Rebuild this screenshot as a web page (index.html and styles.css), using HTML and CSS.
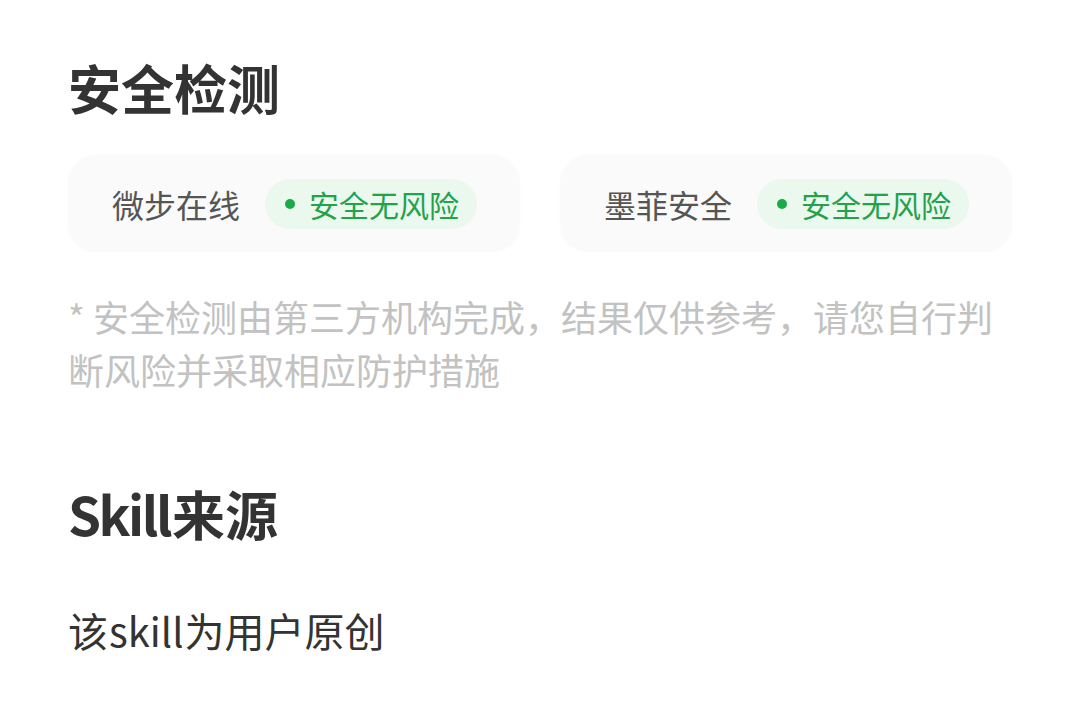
FILE: index.html
```html
<!DOCTYPE html>
<html lang="zh-CN">
<head>
<meta charset="utf-8">
<title>安全检测</title>
<link rel="stylesheet" href="styles.css">
</head>
<body>
<main class="page">
  <section class="section">
    <h2 class="section-title">安全检测</h2>
    <div class="scan-list">
      <div class="scan-card">
        <span class="vendor">微步在线</span>
        <span class="status"><i class="dot"></i>安全无风险</span>
      </div>
      <div class="scan-card">
        <span class="vendor">墨菲安全</span>
        <span class="status"><i class="dot"></i>安全无风险</span>
      </div>
    </div>
    <p class="note">* 安全检测由第三方机构完成，结果仅供参考，请您自行判断风险并采取相应防护措施</p>
  </section>
  <section class="section source">
    <h2 class="section-title"><span class="latin">Skill</span>来源</h2>
    <p class="source-text">该<span class="latin-light">skill</span>为用户原创</p>
  </section>
</main>
</body>
</html>
```

FILE: styles.css
```css
* { box-sizing: border-box; }

html, body {
  margin: 0;
  padding: 0;
  background: #ffffff;
}

body {
  font-family: "Noto Sans CJK SC", "Noto Sans", sans-serif;
  color: #333333;
}

.page {
  padding: 52px 68px 0 68px;
  width: 1080px;
}

.section-title {
  margin: 0;
  font-size: 53px;
  line-height: 70px;
  font-weight: 700;
  color: #333333;
}

.latin {
  letter-spacing: -2.5px;
  margin-right: 2px;
}

.scan-list {
  display: grid;
  grid-template-columns: 452px 452px;
  column-gap: 40px;
  margin-top: 33px;
}

.scan-card {
  display: flex;
  align-items: center;
  height: 97px;
  padding-left: 44px;
  background: #fafafa;
  border-radius: 28px;
  box-shadow: 0 0 10px rgba(0, 0, 0, 0.012);
}

.vendor {
  font-size: 32px;
  color: #555555;
  line-height: 40px;
}

.status {
  display: inline-flex;
  align-items: center;
  margin-left: 25px;
  height: 50px;
  padding: 0 18px 0 18px;
  border-radius: 25px;
  background: #ebf8ee;
  color: #22a24a;
  font-size: 30px;
  line-height: 40px;
}

.dot {
  width: 10px;
  height: 10px;
  border-radius: 50%;
  background: #1aab48;
  margin: 0 14px 0 2px;
}

.note {
  margin: 38px 0 0 0;
  font-size: 36px;
  line-height: 53px;
  color: #c2c2c2;
}

.source {
  margin-top: 82px;
}

.source-text {
  margin: 56px 0 0 0;
  font-size: 40px;
  line-height: 52px;
  color: #333333;
}

.latin-light {
  margin: 0 1px;
}
```
